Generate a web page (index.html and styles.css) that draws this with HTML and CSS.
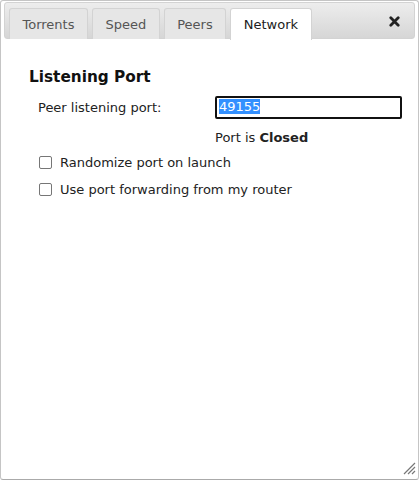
FILE: index.html
```html
<!DOCTYPE html>
<html>
<head>
<meta charset="utf-8">
<link rel="stylesheet" href="styles.css">
</head>
<body>
<div class="dialog">
  <div class="header">
    <ul class="tabs">
      <li class="tab">Torrents</li>
      <li class="tab">Speed</li>
      <li class="tab">Peers</li>
      <li class="tab active">Network</li>
    </ul>
    <span class="close" aria-label="close">
      <svg width="11" height="11" viewBox="0 0 11 11"><path d="M1.8 1.8 L9.2 9.2 M9.2 1.8 L1.8 9.2" stroke="#222" stroke-width="2.8" stroke-linecap="round"/></svg>
    </span>
  </div>
  <div class="content">
    <h3 class="section-title">Listening Port</h3>
    <div class="row">
      <label class="label">Peer listening port:</label>
      <span class="port-input"><span class="sel">49155</span></span>
    </div>
    <div class="status">Port is <b>Closed</b></div>
    <label class="check"><span class="box"></span>Randomize port on launch</label>
    <label class="check"><span class="box"></span>Use port forwarding from my router</label>
  </div>
  <span class="resize">
    <svg width="14" height="14" viewBox="0 0 14 14"><path d="M13 2 L2 13 M13 6 L6 13 M13 10 L10 13" stroke="#777" stroke-width="1.2"/></svg>
  </span>
</div>
</body>
</html>
```

FILE: styles.css
```css
html, body { margin: 0; padding: 0; background: #fff; }
body { font-family: "DejaVu Sans", Verdana, sans-serif; font-size: 13px; color: #222; }
.dialog {
  position: relative;
  box-sizing: border-box;
  width: 419px;
  height: 480px;
  border: 1px solid #c5c5c5;
  border-bottom-color: #aaa;
  border-radius: 3px;
  padding: 1px 3px 0 3px;
}
.header {
  display: flex;
  align-items: flex-end;
  justify-content: space-between;
  height: 37px;
  box-sizing: border-box;
  border: 1px solid #d3d3d3;
  border-radius: 3px;
  background: linear-gradient(#ededed, #d6d6d6);
  padding: 0 0 0 4px;
}
.tabs { display: flex; gap: 4px; list-style: none; margin: 0; padding: 0; height: 30px; }
.tab {
  box-sizing: border-box;
  height: 31px;
  margin-bottom: -1px;
  padding: 8px 12.5px 0;
  border: 1px solid #d3d3d3;
  border-bottom: none;
  border-radius: 3px 3px 0 0;
  background: #e6e6e6;
  color: #555;
  font-size: 13px;
}
.tab.active { background: #fff; color: #212121; height: 32px; }
.close { align-self: center; margin-right: 14px; margin-top: 2px; display: flex; }
.content { padding: 29px 0 0 25px; }
.section-title { margin: 0 0 10px 0; font-size: 15.3px; font-weight: bold; color: #111; }
.row { display: flex; align-items: center; padding-left: 9px; }
.label { width: 177px; }
.port-input {
  box-sizing: border-box;
  width: 187px;
  height: 23px;
  border: 2px solid #111;
  border-radius: 2px;
  padding: 1px 2px 0 2px;
}
.sel { background: #3390ff; color: #fff; }
.status { padding-left: 186px; margin-top: 11px; }
.check { display: flex; align-items: center; padding-left: 9px; margin-top: 8px; height: 19px; }
.check + .check { margin-top: 8px; }
.box {
  box-sizing: border-box;
  width: 13px; height: 13px;
  border: 1px solid #767676;
  border-radius: 2px;
  margin: 0 8px 0 1px;
  background: #fff;
}
.resize { position: absolute; right: 2px; bottom: 4px; display: flex; }
```
